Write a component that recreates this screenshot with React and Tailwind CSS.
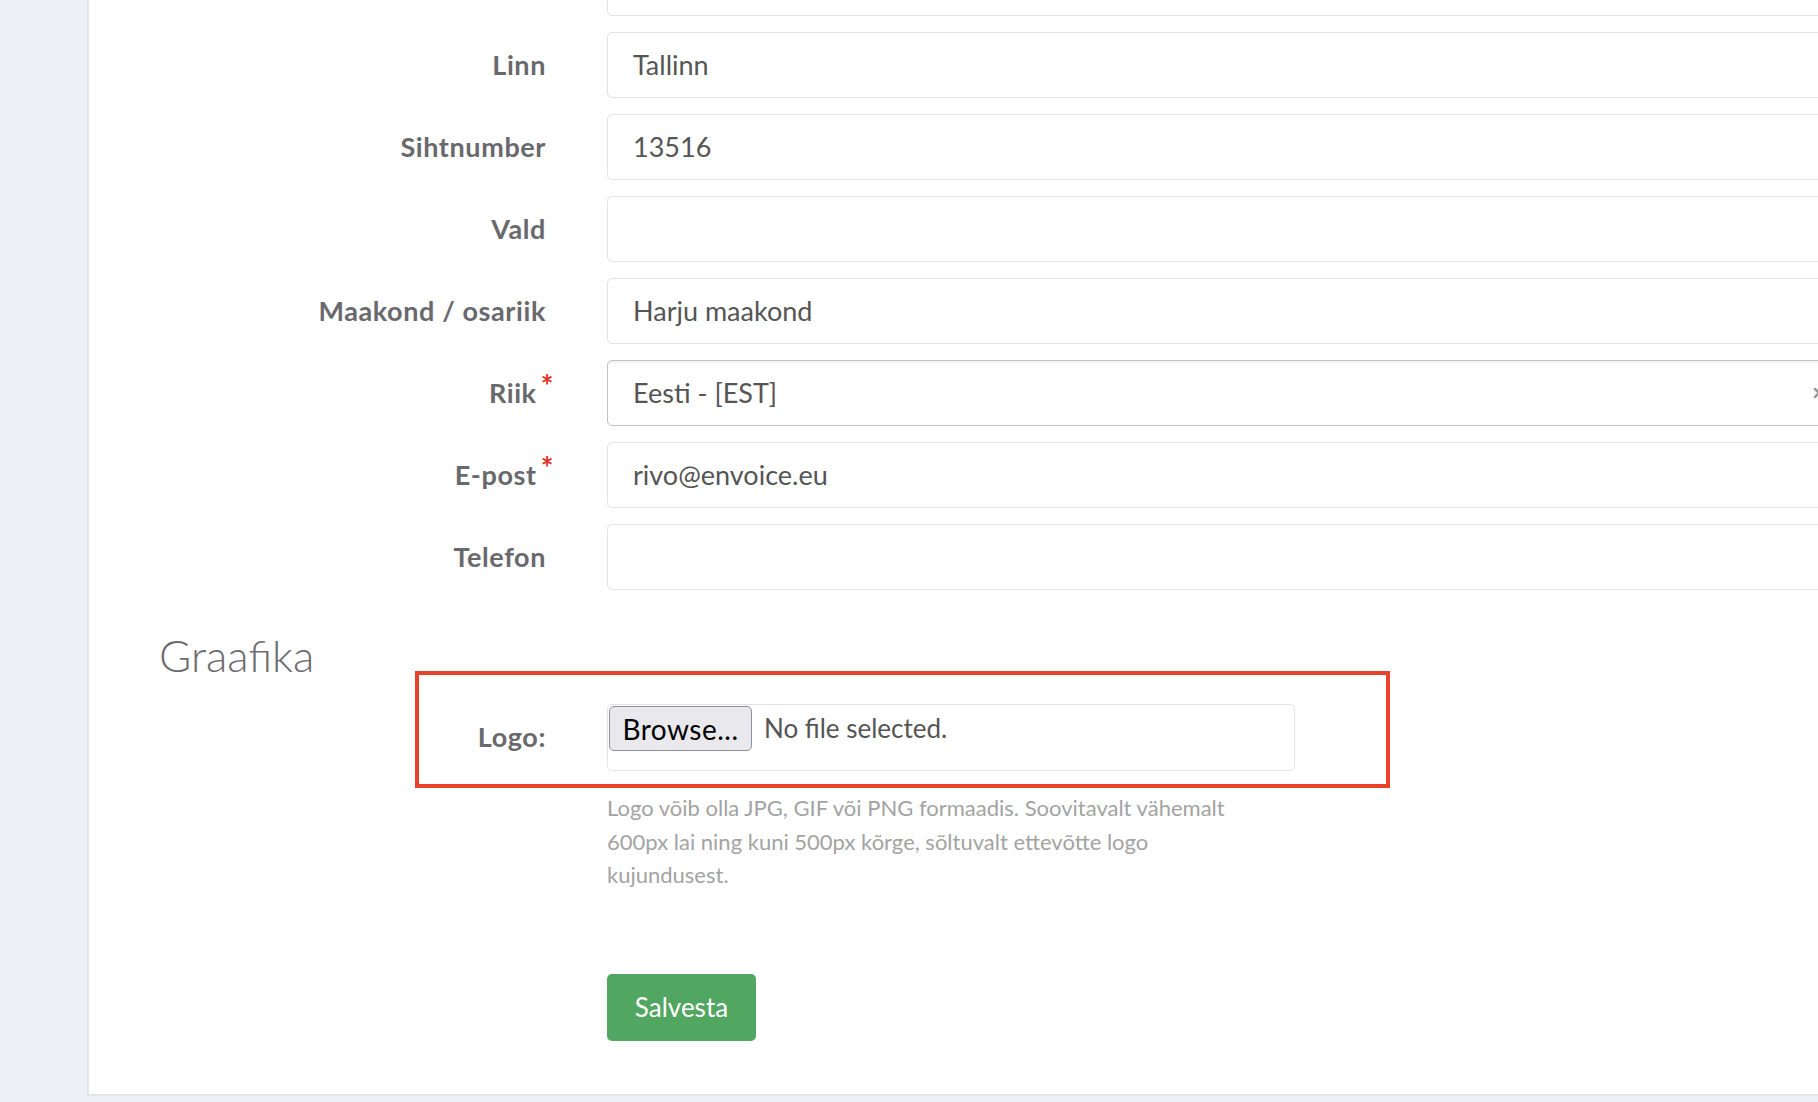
import React from 'react';

const font = { fontFamily: 'Lato, "Open Sans", sans-serif' };

const fields = [
  { label: '', value: '' },
  { label: 'Linn', value: 'Tallinn' },
  { label: 'Sihtnumber', value: '13516' },
  { label: 'Vald', value: '' },
  { label: 'Maakond / osariik', value: 'Harju maakond' },
  { label: 'Riik', value: 'Eesti - [EST]', required: true, select: true },
  { label: 'E-post', value: 'rivo@envoice.eu', required: true },
  { label: 'Telefon', value: '' },
];

const Label = ({ children, required }) => (
  <div className="w-[387px] shrink-0 flex justify-end items-start text-[27px] tracking-[0.6px] font-bold text-[#69696d]">
    <span>{children}</span>
    {required && <span className="ml-[4px] -mr-[8px] -mt-[3px] text-[30px] leading-none text-[#e53222]">*</span>}
  </div>
);

const FieldRow = ({ label, value, required, select }) => (
  <div className="flex items-center mb-4">
    <Label required={required}>{label}</Label>
    <div
      className={`ml-[61px] flex-1 h-[66px] rounded-[5px] bg-white flex items-center pl-[25px] text-[27px] text-[#555] relative ${
        select ? 'border-[1.5px] border-[#c4c4c4] shadow-[inset_0_2px_2px_rgba(0,0,0,0.06)]' : 'border-[1.5px] border-[#e3e3e3]'
      }`}
    >
      {value}
      {/* select clear button, cut by the viewport edge */}
      {select && (
        <svg className="absolute left-[1205px] top-[26px]" width="12" height="12" viewBox="0 0 12 12">
          <path d="M2 2 L10 10 M10 2 L2 10" stroke="#999" strokeWidth="2.5" strokeLinecap="round" />
        </svg>
      )}
    </div>
  </div>
);

export default function App() {
  return (
    <div className="w-full h-[1102px] bg-[#eef0f5] overflow-hidden flex" style={font}>
      <div className="ml-[87px] w-[1800px] shrink-0 h-[1096px] bg-white border-l-2 border-b-2 border-[#e4e5ea] pl-[70px] overflow-hidden">
        <div className="-mt-[50px]">
          {fields.map((f, i) => (
            <FieldRow key={i} {...f} />
          ))}
        </div>

        <h2 className="mt-[40px] text-[44px] leading-[50px] font-light text-[#6c6c70]">Graafika</h2>

        <div className="relative mt-[24px] flex items-center">
          <div className="absolute left-[256px] -top-[33px] w-[975px] h-[117px] border-4 border-[#e8412c] pointer-events-none" />
          <Label>Logo:</Label>
          <div className="ml-[61px] w-[688px] h-[67px] rounded-[5px] border-[1.5px] border-[#e3e3e3] px-[1px] pt-[1px] flex items-start">
            <div className="w-[143px] h-[45px] rounded-[5px] border-[1.5px] border-[#8f8f9d] bg-[#e9e9ed] flex items-center justify-center text-[28px] tracking-[0.5px] text-black">
              Browse...
            </div>
            <span className="ml-[12px] mt-[3px] text-[26px] text-[#555]">No file selected.</span>
          </div>
        </div>

        <div className="flex">
          <div className="w-[387px] shrink-0" />
          <p className="ml-[61px] mt-[20px] w-[640px] text-[22px] leading-[33.5px] text-[#a3a3a3]">
            Logo võib olla JPG, GIF või PNG formaadis. Soovitavalt vähemalt 600px lai ning kuni 500px kõrge, sõltuvalt ettevõtte logo kujundusest.
          </p>
        </div>

        <div className="flex mt-[82px]">
          <div className="w-[387px] shrink-0" />
          <button className="ml-[61px] w-[149px] h-[67px] rounded-[5px] bg-[#51a661] text-white text-[26px] flex items-center justify-center">
            Salvesta
          </button>
        </div>
      </div>
    </div>
  );
}
